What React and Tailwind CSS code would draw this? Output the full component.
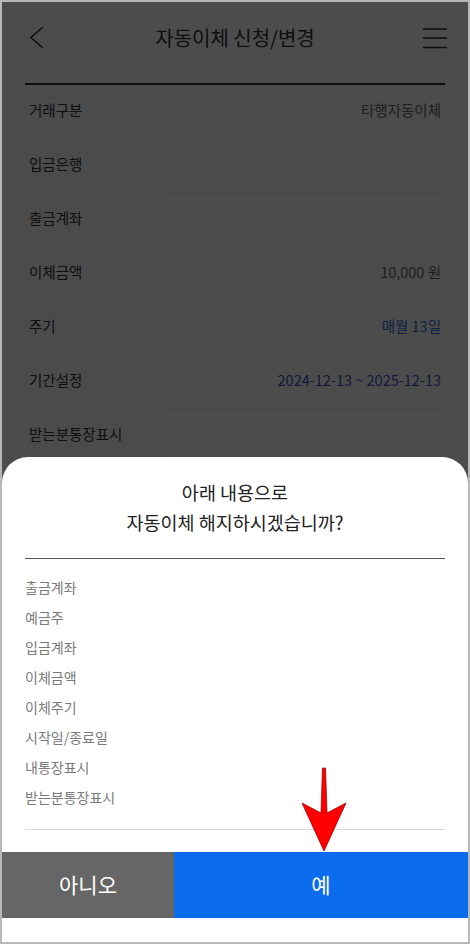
import React from "react";

const rows = [
  { label: "거래구분", value: "타행자동이체", color: "text-[#666]" },
  { label: "입금은행", value: "" },
  { label: "출금계좌", value: "" },
  { label: "이체금액", value: "10,000 원", color: "text-[#666]" },
  { label: "주기", value: "매월 13일", color: "text-[#2f6fdf]" },
  { label: "기간설정", value: "2024-12-13 ~ 2025-12-13", color: "text-[#3d55cc]" },
  { label: "받는분통장표시", value: "" },
];

const items = ["출금계좌", "예금주", "입금계좌", "이체금액", "이체주기", "시작일/종료일", "내통장표시", "받는분통장표시"];

export default function App() {
  return (
    <div className="w-[470px] h-[944px] border-2 border-[#b8b8b8] relative overflow-hidden bg-white font-['Noto_Sans_CJK_KR',sans-serif]">
      {/* Header */}
      <div className="h-[72px] grid grid-cols-[1fr_auto_1fr] items-center">
        <div className="pl-[27px] flex items-center">
          <svg width="16" height="24" viewBox="0 0 16 24" fill="none" stroke="#333" strokeWidth="1.6">
            <polyline points="14,1 2,11.5 14,22" />
          </svg>
        </div>
        <div className="text-[20px] text-[#333] leading-none">자동이체 신청/변경</div>
        <div className="flex justify-end pr-[20px]">
          <svg width="26" height="22" viewBox="0 0 26 22" stroke="#333" strokeWidth="1.6">
            <line x1="1" y1="2" x2="25" y2="2" />
            <line x1="1" y1="11" x2="25" y2="11" />
            <line x1="1" y1="20.5" x2="25" y2="20.5" />
          </svg>
        </div>
      </div>
      <div className="h-[9px]" />
      <div className="mx-[23px] border-t-2 border-[#333]">
        {rows.map((r) => (
          <div key={r.label} className="h-[54px] flex border-b border-[#efefef]">
            <div className="w-[140px] bg-[#fafafa] pl-1 pb-1 flex items-center text-[14.5px] text-[#333]">{r.label}</div>
            <div className={`flex-1 pr-1 pb-1 flex items-center justify-end text-[14.5px] ${r.color || ""}`}>{r.value}</div>
          </div>
        ))}
      </div>

      {/* Overlay */}
      <div className="absolute inset-0 bg-black/70" />

      {/* Bottom sheet */}
      <div className="absolute left-0 right-0 bottom-0 h-[485px] bg-white rounded-t-[26px] flex flex-col">
        <div className="pt-[20px] text-center text-[18.5px] leading-[30px] text-[#222]">
          <div>아래 내용으로</div>
          <div>자동이체 해지하시겠습니까?</div>
        </div>
        <div className="mx-[23px] mt-[21px] border-t border-[#555] border-b border-b-[#dcdcdc] pt-[13px] pb-[17px]">
          {items.map((t) => (
            <div key={t} className="leading-[30px] text-[14px] text-[#7a7a7a]">{t}</div>
          ))}
        </div>
        <div className="mt-[22px] h-[66px] flex text-white text-[21px]">
          <div className="w-[172px] bg-[#666] flex items-center justify-center">아니오</div>
          <div className="flex-1 bg-[#0b6cf0] flex items-center justify-center">예</div>
        </div>
      </div>

      {/* Red arrow */}
      <svg className="absolute left-[296px] top-[763px]" width="54" height="90" viewBox="296 765 54 90">
        <polygon
          points="320.5,768 323.5,768 325,813 344,803 322,851 300,803 319,813"
          fill="#ff0000"
          stroke="#a00000"
          strokeWidth="0.8"
          strokeLinejoin="round"
        />
      </svg>
    </div>
  );
}
